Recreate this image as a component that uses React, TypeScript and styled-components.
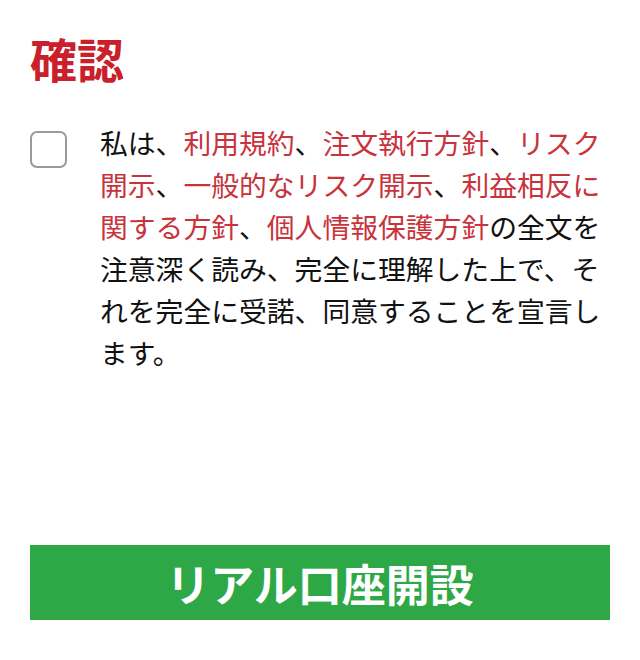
import { Fragment } from 'react';
import styled, { createGlobalStyle } from 'styled-components';

const GlobalStyle = createGlobalStyle`
    html, body {
        margin: 0;
        padding: 0;
        background: #ffffff;
    }
    body {
        font-family: "Noto Sans CJK JP", "Noto Sans", sans-serif;
        color: #111111;
    }
`;

const Page = styled.div`
    width: 640px;
    height: 660px;
    box-sizing: border-box;
    padding: 30px 30px 0;
    display: flex;
    flex-direction: column;
`;

const Title = styled.h1`
    margin: 0;
    font-size: 47px;
    line-height: 56px;
    font-weight: 700;
    color: #c9202c;
`;

const Agreement = styled.label`
    display: flex;
    align-items: flex-start;
    gap: 33px;
    margin-top: 35px;
    cursor: pointer;
`;

const Box = styled.input.attrs({ type: 'checkbox' })`
    appearance: none;
    flex: none;
    width: 37px;
    height: 37px;
    margin: 10px 0 0;
    box-sizing: border-box;
    border: 2px solid #9a9a9a;
    border-radius: 7px;
    background: #ffffff;
`;

const Statement = styled.p`
    margin: 0;
    width: 508px;
    font-size: 27.8px;
    line-height: 42px;
    color: #111111;
`;

const Doc = styled.a`
    color: #c8333c;
    text-decoration: none;
`;

const Spacer = styled.div`
    flex: 1;
`;

const OpenButton = styled.button`
    width: 580px;
    height: 75px;
    margin-bottom: 40px;
    border: none;
    background: #2ea846;
    color: #ffffff;
    font-family: "Noto Sans CJK JP", "Noto Sans", sans-serif;
    font-size: 44px;
    font-weight: 700;
    cursor: pointer;
`;

const documents = [
    '利用規約',
    '注文執行方針',
    'リスク開示',
    '一般的なリスク開示',
    '利益相反に関する方針',
    '個人情報保護方針',
];

const App = () => (
    <>
        <GlobalStyle />
        <Page>
            <Title>確認</Title>
            <Agreement>
                <Box />
                <Statement>
                    私は、
                    {documents.map((doc, i) => (
                        <Fragment key={doc}>
                            <Doc href="#">{doc}</Doc>
                            {i < documents.length - 1 ? '、' : ''}
                        </Fragment>
                    ))}
                    の全文を注意深く読み、完全に理解した上で、それを完全に受諾、同意することを宣言します。
                </Statement>
            </Agreement>
            <Spacer />
            <OpenButton>リアル口座開設</OpenButton>
        </Page>
    </>
);

export default App;
